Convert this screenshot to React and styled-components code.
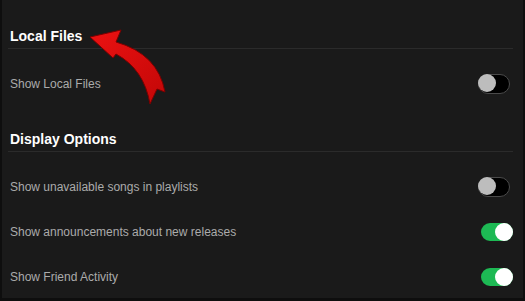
import React from "react";
import styled, { createGlobalStyle } from "styled-components";

const Global = createGlobalStyle`
  html, body { margin: 0; padding: 0; background: #0e0e0e; }
  body { width: 525px; height: 301px; overflow: hidden; }
  * { box-sizing: border-box; }
`;

const Frame = styled.div`
  position: relative;
  width: 525px;
  height: 301px;
  background: #1a1a1a;
  border-left: 2px solid #0e0e0e;
  border-right: 2px solid #0e0e0e;
  border-bottom: 3px solid #0e0e0e;
  padding: 26px 10px 0 6px;
  font-family: "Liberation Sans", Arial, sans-serif;
  display: flex;
  flex-direction: column;
`;

const Section = styled.section`
  display: flex;
  flex-direction: column;
  margin-top: ${(p) => p.$gap || 0}px;
`;

const Title = styled.h2`
  margin: 0;
  font-size: 14px;
  line-height: 18px;
  font-weight: 700;
  color: #ffffff;
  padding: 1px 0 3px 2px;
  border-bottom: 1px solid #2b2b2b;
  margin-bottom: 12px;
`;

const Row = styled.div`
  height: 45px;
  display: flex;
  align-items: center;
  justify-content: space-between;
`;

const Label = styled.span`
  font-size: 12px;
  color: #ababab;
  padding-left: 2px;
`;

const Track = styled.div`
  position: relative;
  width: 32px;
  height: ${(p) => (p.$on ? 18 : 20)}px;
  border-radius: 10px;
  margin-right: ${(p) => (p.$on ? 0 : 3)}px;
  background: ${(p) => (p.$on ? "#1db954" : "#000")};
  border: ${(p) => (p.$on ? "none" : "1.5px solid #4a4a4a")};
`;

const Knob = styled.div`
  position: absolute;
  top: 0;
  ${(p) => (p.$on ? "right: 0;" : "left: -1px;")}
  width: 18px;
  height: 18px;
  margin-top: ${(p) => (p.$on ? 0 : -0.5)}px;
  border-radius: 50%;
  background: ${(p) => (p.$on ? "#ffffff" : "#bdbdbd")};
`;

const Toggle = ({ on }) => (
  <Track $on={on}>
    <Knob $on={on} />
  </Track>
);

const Arrow = styled.svg`
  position: absolute;
  left: 0;
  top: 0;
  pointer-events: none;
`;

export default function App() {
  return (
    <>
      <Global />
      <Frame>
        <Section>
          <Title>Local Files</Title>
          <Row>
            <Label>Show Local Files</Label>
            <Toggle on={false} />
          </Row>
        </Section>
        <Section $gap={23}>
          <Title>Display Options</Title>
          <Row>
            <Label>Show unavailable songs in playlists</Label>
            <Toggle on={false} />
          </Row>
          <Row>
            <Label>Show announcements about new releases</Label>
            <Toggle on />
          </Row>
          <Row>
            <Label>Show Friend Activity</Label>
            <Toggle on />
          </Row>
        </Section>
        <Arrow width="525" height="301" viewBox="0 0 525 301">
          <defs>
            <linearGradient id="ar" x1="0" y1="0" x2="1" y2="1">
              <stop offset="0" stopColor="#ec1212" />
              <stop offset="1" stopColor="#c20707" />
            </linearGradient>
          </defs>
          <path
            d="M 88 37 L 119 30 L 114 42 Q 156 54 163 92 L 155 89 L 148 104 Q 142 69 114 54 L 111 58 Z"
            fill="url(#ar)"
            stroke="#7a0000"
            strokeWidth="1"
            strokeLinejoin="round"
          />
        </Arrow>
      </Frame>
    </>
  );
}
